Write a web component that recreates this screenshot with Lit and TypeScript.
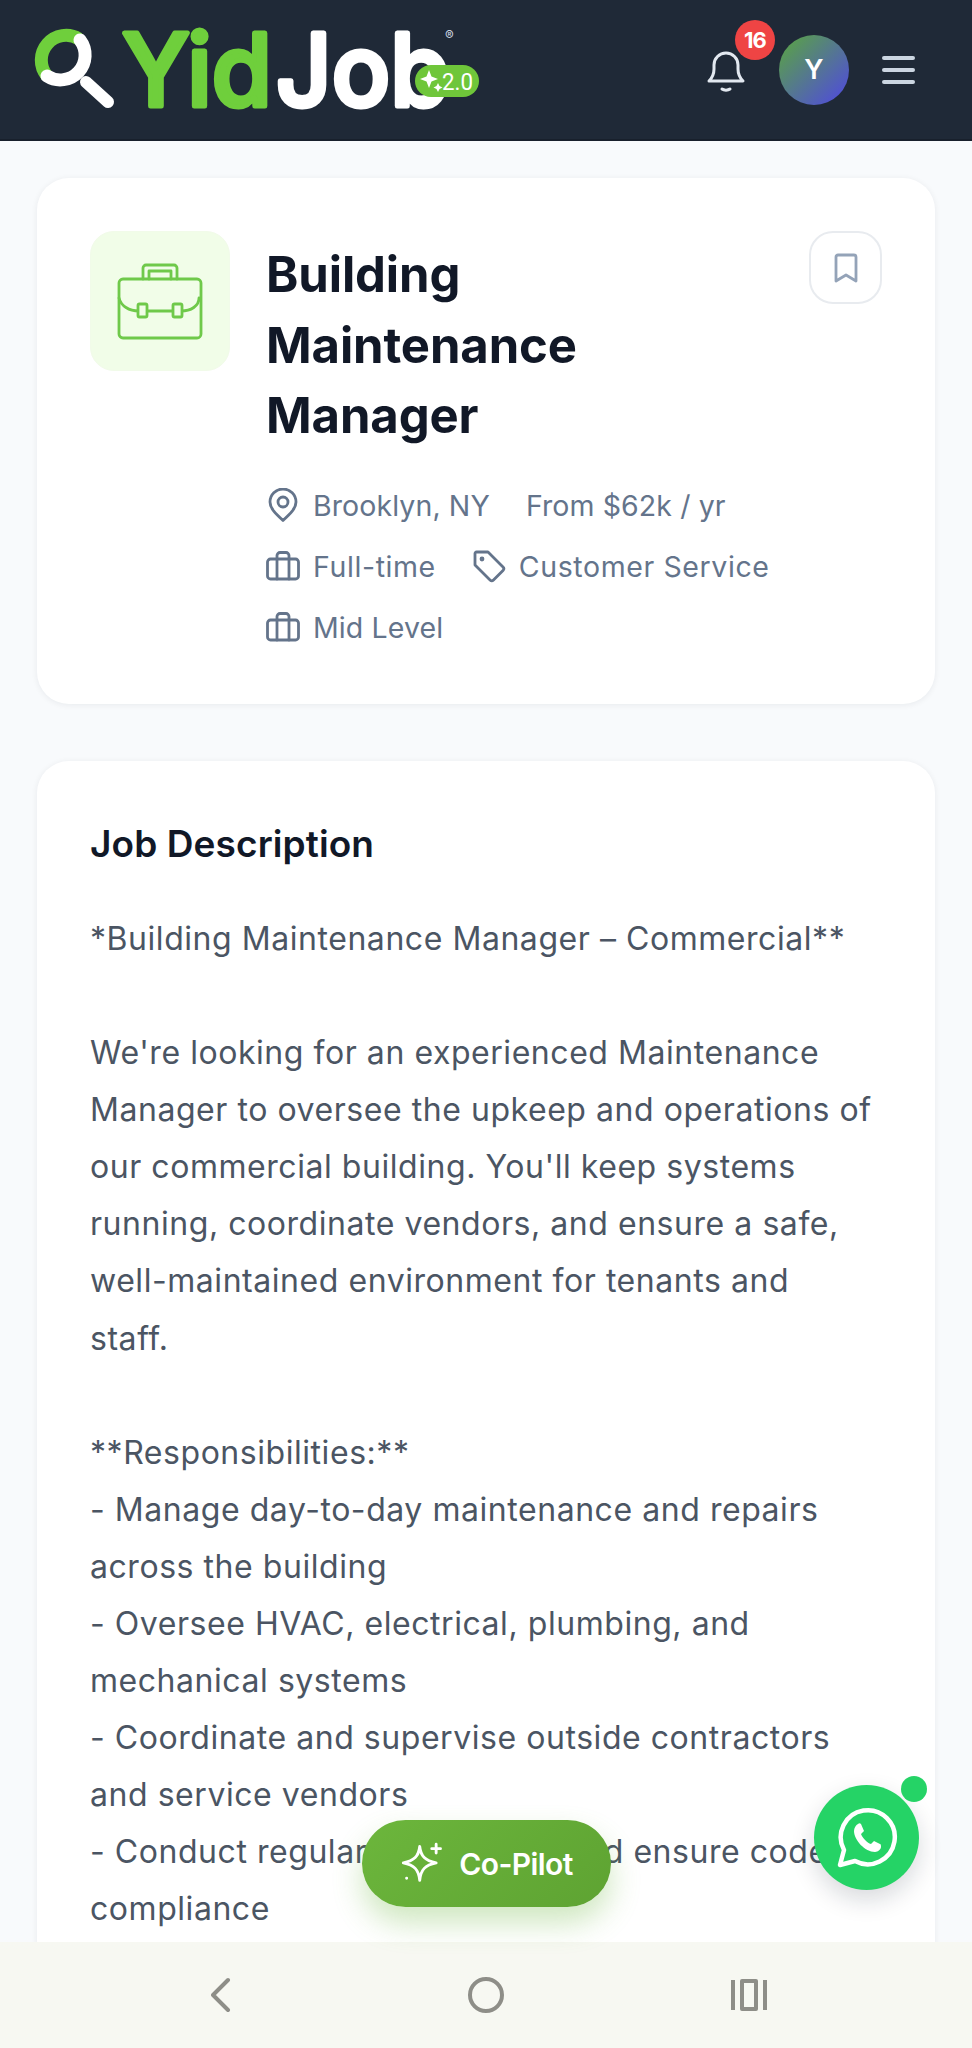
import { LitElement, html, css, svg } from 'lit';
import { customElement } from 'lit/decorators.js';

const suitcase = svg`<rect x="1.500" y="8" width="31" height="20" rx="3"/><path d="M11 8V4.500A3 3 0 0 1 14 1.500h6A3 3 0 0 1 23 4.500V8M11 8v20M23 8v20"/>`;

@customElement('app-root')
export class AppRoot extends LitElement {
  static styles = css`
    :host {
      display: flex;
      flex-direction: column;
      position: relative;
      height: 2048px;
      overflow: hidden;
      background: #f8fafc;
      font-family: Inter, 'Liberation Sans', sans-serif;
    }
    header {
      flex: none;
      height: 141px;
      box-sizing: border-box;
      display: flex;
      align-items: center;
      padding-right: 57px;
      background: #1f2937;
      border-bottom: 2px solid #18202c;
    }
    .logo {
      display: block;
      flex: none;
    }
    .brand {
      font-size: 100px;
      font-weight: 500;
      stroke: currentColor;
      stroke-width: 5px;
      stroke-linejoin: round;
      fill: currentColor;
    }
    .green { color: #6fcf3c; }
    .white { color: #fff; }
    .ver {
      font-family: Roboto, sans-serif;
      font-size: 24px;
      fill: #fff;
    }
    .reg {
      font-size: 13px;
      fill: #cbd5e1;
    }
    .actions {
      margin-left: auto;
      display: flex;
      align-items: center;
    }
    .bell {
      position: relative;
      display: flex;
      margin-right: 32px;
    }
    .count {
      position: absolute;
      left: 30px;
      top: -28px;
      width: 40px;
      height: 40px;
      border-radius: 50%;
      background: #ef4444;
      color: #fff;
      font-size: 22px;
      font-weight: 700;
      letter-spacing: -1px;
      display: flex;
      align-items: center;
      justify-content: center;
    }
    .avatar {
      width: 70px;
      height: 70px;
      border-radius: 50%;
      background: linear-gradient(135deg, #5aa83c, #4f46e5);
      color: #fff;
      font-size: 27px;
      font-weight: 600;
      display: flex;
      align-items: center;
      justify-content: center;
    }
    .menu {
      display: flex;
      flex-direction: column;
      gap: 8px;
      margin-left: 33px;
    }
    .menu i {
      display: block;
      width: 33px;
      height: 4px;
      border-radius: 2px;
      background: #cbd5e1;
    }
    main {
      flex: 1;
      min-height: 0;
      overflow: hidden;
      display: flex;
      flex-direction: column;
      gap: 57px;
      padding: 37px 37px 0;
    }
    .card {
      flex: none;
      background: #fff;
      border-radius: 32px;
      box-shadow: 0 1px 6px rgba(15, 23, 42, 0.07);
      padding: 53px;
    }
    .summary {
      display: flex;
      height: 526px;
      box-sizing: border-box;
    }
    .thumb {
      flex: none;
      width: 140px;
      height: 140px;
      box-sizing: border-box;
      border: 1px solid #f1fbe9;
      border-radius: 24px;
      background: #f1fde8;
      display: flex;
      align-items: center;
      justify-content: center;
    }
    .info {
      flex: 1;
      padding-left: 36px;
    }
    h1 {
      margin: 9px 0 23px;
      max-width: 340px;
      color: #111827;
      font-size: 49px;
      font-weight: 700;
      line-height: 70.500px;
      letter-spacing: -0.1px;
    }
    .row {
      height: 61px;
      display: flex;
      align-items: center;
      gap: 36px;
      color: #64748b;
      font-size: 28.500px;
      letter-spacing: 0.1px;
    }
    .meta {
      display: flex;
      align-items: center;
      gap: 13px;
    }
    .wide {
      letter-spacing: 0.6px;
    }
    .meta svg, .save svg, .thumb svg, .bell > svg, .float svg, nav svg {
      display: block;
      fill: none;
      stroke: currentColor;
      stroke-linecap: round;
      stroke-linejoin: round;
    }
    .save {
      flex: none;
      width: 73px;
      height: 73px;
      box-sizing: border-box;
      border: 2px solid #e8ebef;
      border-radius: 24px;
      color: #94a3b8;
      display: flex;
      align-items: center;
      justify-content: center;
    }
    h2 {
      margin: 0 0 38px;
      color: #111827;
      font-size: 37px;
      font-weight: 600;
      line-height: 56px;
      letter-spacing: 0.1px;
    }
    .body {
      margin: 0;
      color: #4b5563;
      font-size: 32px;
      line-height: 57.080px;
      letter-spacing: 0.55px;
      white-space: pre-line;
    }
    .description {
      padding-top: 55px;
    }
    .float {
      position: absolute;
      display: flex;
      align-items: center;
      justify-content: center;
      color: #fff;
    }
    .copilot {
      left: 362px;
      top: 1820px;
      width: 249px;
      height: 87px;
      gap: 13px;
      border-radius: 44px;
      background: linear-gradient(135deg, #6cb63c, #5ea332);
      box-shadow: 0 16px 30px rgba(106, 180, 60, 0.32);
      font-size: 30px;
      font-weight: 600;
      letter-spacing: -0.6px;
    }
    .whatsapp {
      left: 814px;
      top: 1785px;
      width: 105px;
      height: 105px;
      border-radius: 50%;
      background: #25d366;
      box-shadow: 0 10px 24px rgba(15, 23, 42, 0.16);
    }
    .dot {
      position: absolute;
      left: 901px;
      top: 1776px;
      width: 26px;
      height: 26px;
      border-radius: 50%;
      background: #25d366;
    }
    nav {
      flex: none;
      height: 106px;
      display: grid;
      grid-template-columns: repeat(3, 263px);
      align-items: center;
      justify-items: center;
      justify-content: center;
      background: #f7f8f2;
      color: #8e8e88;
    }
  `;

  render() {
    const description = `*Building Maintenance Manager – Commercial**

We're looking for an experienced Maintenance
Manager to oversee the upkeep and operations of
our commercial building. You'll keep systems
running, coordinate vendors, and ensure a safe,
well-maintained environment for tenants and
staff.

**Responsibilities:**
- Manage day-to-day maintenance and repairs
across the building
- Oversee HVAC, electrical, plumbing, and
mechanical systems
- Coordinate and supervise outside contractors
and service vendors
- Conduct regular inspections and ensure code
compliance`;
    return html`
      <header>
        <svg class="logo" width="500" height="139" viewBox="0 0 500 139" fill="none" stroke-linecap="round">
          <path d="M47 76A24.800 24.800 0 0 1 79 39" stroke="#6fcf3c" stroke-width="13" stroke-linecap="butt"/>
          <path d="M80 40A24.800 24.800 0 0 1 47 76" stroke="#fff" stroke-width="13"/>
          <path d="M86 82L108 102" stroke="#fff" stroke-width="12"/>
          <text class="brand green" x="122" y="105.500" textLength="150" lengthAdjust="spacingAndGlyphs">Yid</text>
          <text class="brand white" x="276" y="105.500" textLength="174" lengthAdjust="spacingAndGlyphs">Job</text>
          <text class="reg" x="445" y="40">®</text>
          <rect x="415" y="65" width="64" height="32" rx="16" fill="#6fc63a"/>
          <path fill="#fff" d="M429 70l2.500 6.500 6.500 2.500-6.500 2.500-2.500 6.500-2.500-6.500-6.500-2.500 6.500-2.500zM438 83l1.500 3 3 1.500-3 1.500-1.500 3-1.500-3-3-1.500 3-1.500z"/>
          <text class="ver" x="442" y="89.500" textLength="31" lengthAdjust="spacingAndGlyphs">2.0</text>
        </svg>
        <div class="actions">
          <div class="bell">
            <svg width="42" height="44" viewBox="0 0 42 44" color="#e2e8f0" stroke-width="3">
              <path d="M4 33c3-3 5-6 5-12v-4a12 12 0 0 1 24 0v4c0 6 2 9 5 12z"/><path d="M17 41c2 1.500 6 1.500 8 0"/>
            </svg>
            <span class="count">16</span>
          </div>
          <div class="avatar">Y</div>
          <div class="menu"><i></i><i></i><i></i></div>
        </div>
      </header>
      <main>
        <section class="card summary">
          <div class="thumb">
            <svg width="86" height="78" viewBox="0 0 86 78" color="#6fc94a" stroke-width="2.800">
              <rect x="2" y="17" width="82" height="59" rx="4"/>
              <path d="M26 17V6a3 3 0 0 1 3-3h28a3 3 0 0 1 3 3v11M32 17v-8h22v8"/>
              <path d="M2 36c2 8 10 13 20 13h42c10 0 18-5 18-13"/>
              <rect x="21" y="42" width="9" height="13" rx="1.500" fill="#f1fde8"/>
              <rect x="56" y="42" width="9" height="13" rx="1.500" fill="#f1fde8"/>
            </svg>
          </div>
          <div class="info">
            <h1>Building Maintenance Manager</h1>
            <div class="row">
              <span class="meta">
                <svg width="34" height="34" viewBox="0 0 34 34" stroke-width="2.800"><path d="M17 32.500C10 26 4 20.500 4 14a13 13 0 0 1 26 0c0 6.500-6 12-13 18.500z"/><circle cx="17" cy="14" r="5"/></svg>
                Brooklyn, NY
              </span>
              <span>From $62k / yr</span>
            </div>
            <div class="row">
              <span class="meta wide">
                <svg width="34" height="30" viewBox="0 0 34 30" stroke-width="2.800">${suitcase}</svg>
                Full-time
              </span>
              <span class="meta wide">
                <svg width="34" height="34" viewBox="0 0 34 34" stroke-width="2.800"><path d="M3 4.500A1.500 1.500 0 0 1 4.500 3H16l15 15a2.500 2.500 0 0 1 0 3.500L21.500 31a2.500 2.500 0 0 1-3.500 0L3 16z"/><circle cx="10" cy="10" r="1" fill="currentColor"/></svg>
                Customer Service
              </span>
            </div>
            <div class="row">
              <span class="meta">
                <svg width="34" height="30" viewBox="0 0 34 30" stroke-width="2.800">${suitcase}</svg>
                Mid Level
              </span>
            </div>
          </div>
          <div class="save">
            <svg width="26" height="32" viewBox="0 0 26 32" stroke-width="2.800"><path d="M3 5a2 2 0 0 1 2-2h16a2 2 0 0 1 2 2v24l-10-6-10 6z"/></svg>
          </div>
        </section>
        <section class="card description">
          <h2>Job Description</h2>
          <p class="body">${description}</p>
        </section>
      </main>
      <nav>
        <svg width="24" height="36" viewBox="0 0 24 36" stroke-width="4"><path d="M17 3L2 18l15 15"/></svg>
        <svg width="38" height="38" viewBox="0 0 38 38" stroke-width="4"><circle cx="19" cy="19" r="16"/></svg>
        <svg width="38" height="34" viewBox="0 0 38 34" stroke-width="4" style="stroke-linecap:butt"><path d="M3 2v30M35 2v30"/><rect x="12" y="3" width="14" height="28"/></svg>
      </nav>
      <div class="float copilot">
        <svg width="46" height="46" viewBox="0 0 42 42" stroke-width="2.600"><path d="M18 5c1 9 5 13 15 15-10 2-14 6-15 16-1-10-5-14-15-16 10-2 14-6 15-15z"/><path d="M33 3v8M29 7h8M6 34h.1"/></svg>
        Co-Pilot
      </div>
      <div class="float whatsapp">
        <svg width="62" height="62" viewBox="0 0 62 62" stroke-width="4.500">
          <path d="M4 58l4-15A27 27 0 1 1 19 54z"/>
          <path fill="#fff" stroke="none" d="M22 17c-2 1-4 4-4 7 0 9 11 21 21 21 3 0 6-3 6-5 0-1 0-3-1-3l-6-3-3 3c-4-1-9-7-10-10l3-3-3-7c-1-1-2-1-3 0z"/>
        </svg>
      </div>
      <span class="dot"></span>
    `;
  }
}
